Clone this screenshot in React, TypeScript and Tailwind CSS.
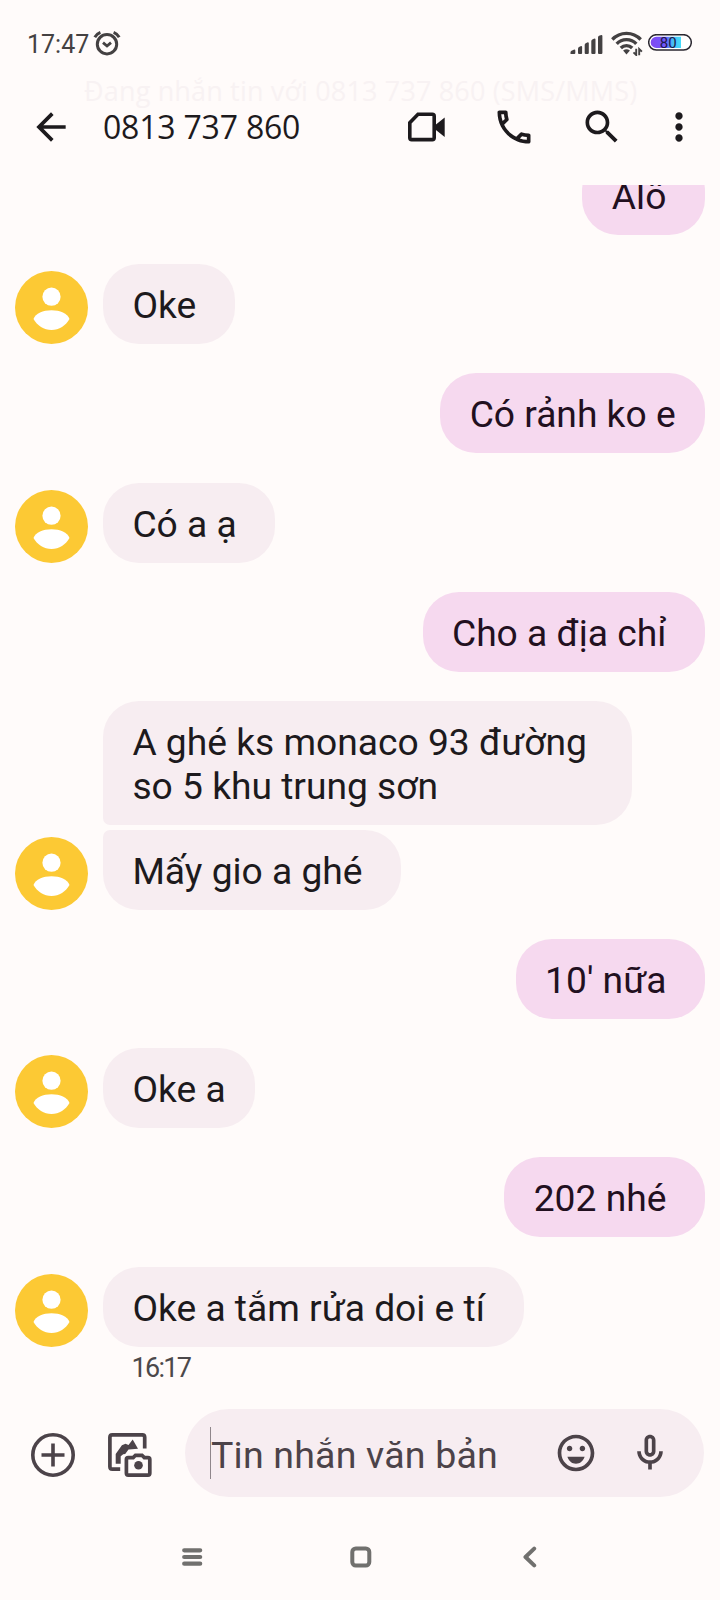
import React from "react";

interface Message {
  text: string;
  mine?: boolean;
  avatar?: boolean;
  // corner overrides for grouped bubbles
  shape?: string;
  gap?: string;
}

const MESSAGES: Message[] = [
  { text: "Alô ", mine: true },
  { text: "Oke ", avatar: true },
  { text: "Có rảnh ko e", mine: true },
  { text: "Có a ạ ", avatar: true },
  { text: "Cho a địa chỉ ", mine: true },
  { text: "A ghé ks monaco 93 đường \nso 5 khu trung sơn", shape: "w-[529px] rounded-bl-[7px]" },
  { text: "Mấy gio a ghé ", avatar: true, shape: "rounded-tl-[7px]", gap: "mt-[4.5px]" },
  { text: "10' nữa ", mine: true },
  { text: "Oke a", avatar: true },
  { text: "202 nhé ", mine: true },
  { text: "Oke a tắm rửa doi e tí ", avatar: true },
];

const Icon: React.FC<{ d: string; className?: string }> = ({ d, className = "" }) => (
  <svg viewBox="0 0 24 24" fill="currentColor" className={`size-11 shrink-0 ${className}`}>
    <path d={d} />
  </svg>
);

const Avatar = () => (
  <svg viewBox="0 0 73 73" className="size-[73px] shrink-0">
    <circle cx="36.5" cy="36.5" r="36.5" fill="#fcc934" />
    <circle cx="36.5" cy="25.7" r="9.1" fill="#fff" />
    <path
      d="M18.5 48C20.5 42.5 28 39.3 36.5 39.3S52.5 42.5 54.5 48C51 54.5 44 59 36.5 59S22 54.5 18.5 48Z"
      fill="#fff"
    />
  </svg>
);

const StatusBar = () => (
  <div className="flex h-[72px] items-start px-7 pt-7 text-[#444142]">
    <span className="-ml-px mt-[1px] w-[66px] text-[25px] leading-[31px]">17:47</span>
    <svg viewBox="0 0 28 28" className="mt-px size-7" fill="none" stroke="currentColor">
      <circle cx="14" cy="15.2" r="9.7" strokeWidth="3" />
      <path d="M10 13.6l4 3.4 4-3.4" strokeWidth="2.8" />
      <path d="M1.8 8.2C3 6 5 4.3 7.4 3.4M26.2 8.2C25 6 23 4.3 20.6 3.4" strokeWidth="3" />
    </svg>
    <div className="ml-auto flex items-center">
      <svg viewBox="0 0 34 24" className="mr-[2px] mt-px h-6 w-[34px]" fill="currentColor">
        <path d="M.5 23v-1.700q0-1 1-1.500l2.800-1.300q1 0 1 1v2.500q0 1-1 1H1.500z" />
        <path d="M8 17.500q0-1 1-1.500l2.100-.9q1 0 1 1v5.900q0 1-1 1H9q-1 0-1-1z" />
        <path d="M14.700 13.700q0-1 1-1.500l2.100-.9q1 0 1 1v9.700q0 1-1 1h-2.100q-1 0-1-1z" />
        <path d="M21.300 10q0-1 1-1.500l2.200-.9q1 0 1 1v13.400q0 1-1 1h-2.200q-1 0-1-1z" />
        <path d="M28 6.300q0-1 1-1.500l2.400-.9q1 0 1 1v17.100q0 1-1 1H29q-1 0-1-1z" />
      </svg>
      <svg viewBox="0 0 32 26" className="ml-[5px] mt-[2px] h-[26px] w-8" fill="none" stroke="currentColor" strokeWidth="3.3">
        <path d="M1.300 9.500C9 1.300 22 1.300 29.700 9.500" />
        <path d="M5.700 13.800C10.800 8.100 20.200 8.100 25.300 13.800" />
        <path d="M9.800 18C13 14.700 18 14.700 21.200 18" />
        <path d="M12.100 20.500Q15.500 18 18.900 20.500L15.500 24.500Z" fill="currentColor" stroke="none" />
        <path d="M25.200 18.800v6.200l-2.700-2.700M28.200 25.200v-6.200l2.700 2.700" strokeWidth="1.900" />
      </svg>
      <svg viewBox="0 0 44 17" className="ml-[5px] h-[17px] w-11">
        <defs>
          <linearGradient id="charge">
            <stop offset="0" stopColor="#8048f0" />
            <stop offset="0.5" stopColor="#7058ff" />
            <stop offset="0.72" stopColor="#45bdf5" />
            <stop offset="1" stopColor="#45dcfb" />
          </linearGradient>
        </defs>
        <rect x="0.7" y="0.7" width="42.6" height="15.4" rx="7.7" fill="#fff" stroke="#2b2730" strokeWidth="1.5" />
        <path d="M8.3 2.8H33v11.2H8.300a5.600 5.600 0 0 1 0-11.200z" fill="url(#charge)" />
        <text x="20.2" y="13.7" textAnchor="middle" fontSize="15" fill="#1c1a4c" className="font-['Roboto',sans-serif]">
          80
        </text>
      </svg>
    </div>
  </div>
);

const Header = () => (
  <header className="relative flex h-[113px] items-start pt-[33px] text-[#1d1a1d]">
    <p className="absolute left-[84px] top-0 whitespace-nowrap font-['Open_Sans',sans-serif] text-[27px] leading-[38px] tracking-[0.16px] text-[#f8f2f3]">
      Đang nhắn tin với 0813 737 860 (SMS/MMS)
    </p>
    <Icon className="ml-[29px]" d="M20 11H7.830l5.590-5.590L12 4l-8 8 8 8 1.410-1.410L7.830 13H20v-2z" />
    <h1 className="ml-[30px] w-[300px] font-['Open_Sans',sans-serif] text-[32px] leading-[44px] tracking-[-0.2px]">0813 737 860</h1>
    <svg viewBox="0 0 44 44" className="ml-[1px] size-11 shrink-0">
      <path d="M14 9.300h14.300q1.900 0 1.900 1.900v21.500q0 1.900-1.900 1.900H7.700q-1.900 0-1.900-1.900V17.700z" fill="none" stroke="currentColor" strokeWidth="3.600" />
      <path d="M31 20.200l9.700-7.800v19.500L31 24.200z" fill="currentColor" />
    </svg>
    <Icon
      className="ml-[44px]"
      d="M6.540 5c.06.890.210 1.760.450 2.590l-1.200 1.200c-.410-1.200-.670-2.470-.760-3.790h1.510m9.860 12.020c.850.240 1.720.390 2.600.450v1.490c-1.320-.09-2.590-.350-3.800-.750l1.200-1.190M7.500 3H4c-.550 0-1 .450-1 1 0 9.390 7.610 17 17 17 .550 0 1-.450 1-1v-3.490c0-.550-.450-1-1-1-1.240 0-2.450-.200-3.570-.570-.100-.040-.210-.050-.310-.050-.260 0-.510.100-.710.290l-2.200 2.200c-2.830-1.450-5.150-3.760-6.590-6.590l2.200-2.200c.280-.280.360-.670.250-1.020C8.700 6.450 8.500 5.250 8.500 4c0-.550-.450-1-1-1z"
    />
    <Icon
      className="ml-[44px]"
      d="M15.500 14h-.790l-.280-.270C15.410 12.590 16 11.110 16 9.500 16 5.910 13.090 3 9.500 3S3 5.910 3 9.500 5.910 16 9.500 16c1.610 0 3.090-.590 4.230-1.570l.270.280v.790l5 4.990L20.490 19l-4.990-5zm-6 0C7.010 14 5 11.990 5 9.500S7.010 5 9.500 5 14 7.010 14 9.500 11.990 14 9.500 14z"
    />
    <Icon
      className="ml-[33px]"
      d="M12 8c1.100 0 2-.900 2-2s-.900-2-2-2-2 .900-2 2 .900 2 2 2zm0 2c-1.100 0-2 .900-2 2s.900 2 2 2 2-.900 2-2-.900-2-2-2zm0 6c-1.100 0-2 .900-2 2s.900 2 2 2 2-.900 2-2-.900-2-2-2z"
    />
  </header>
);

const Bubble: React.FC<{ message: Message }> = ({ message }) => {
  const { text, mine, avatar, shape = "", gap = "mt-[29.25px]" } = message;
  return (
    <div className={`flex shrink-0 items-end ${gap} ${mine ? "justify-end" : ""}`}>
      {!mine && <div className="mr-[15.5px] w-[73px] shrink-0">{avatar && <Avatar />}</div>}
      <div
        className={`whitespace-pre rounded-[36px] px-[29.4px] pb-[17px] pt-[19px] text-[37.2px] leading-[44px] ${
          mine ? "bg-[#f6d9ef] text-[#22101f]" : "bg-[#f7edf1] text-[#1d1a1d]"
        } ${shape}`}
      >
        {text}
      </div>
    </div>
  );
};

const Composer = () => (
  <div className="flex h-[88px] items-center pl-[31px] pr-4 text-[#4c4349]">
    <svg viewBox="0 0 44 44" className="mt-[3px] size-11" fill="none" stroke="currentColor" strokeWidth="3.6">
      <circle cx="22" cy="22" r="20.2" />
      <path d="M22 10.5v23M10.5 22h23" />
    </svg>
    <svg viewBox="0 0 44 44" className="ml-[33px] mt-[3px] size-11" fill="none" stroke="currentColor" strokeWidth="3.7">
      <path d="M12.2 36.2H4.300q-2.400 0-2.400-2.400V4.300q0-2.400 2.400-2.400h30q2.400 0 2.400 2.400v11.300" />
      <path d="M7.700 30.800V21l6.200-8.700 3.600-1.600 3 1.300L24.700 6.500l5.300 9.300-9.500.7-3.300 4.500-2 .3-2.500 2v7.500z" fill="currentColor" stroke="none" />
      <path d="M20.200 24.600h5l2.300-2.300h6.500l2.300 2.300h3.700q1.800 0 1.800 1.800v13.900q0 1.800-1.800 1.800H20.200q-1.800 0-1.800-1.800V26.400q0-1.800 1.800-1.800z" />
      <circle cx="30.500" cy="32.200" r="4.300" fill="currentColor" stroke="none" />
    </svg>
    <div className="ml-[33px] flex h-full flex-1 items-center rounded-full bg-[#f7edf1] pl-[25px] pr-[32px]">
      <span className="h-[52px] w-px bg-[#8f868b]" />
      <span className="whitespace-nowrap pt-[3px] text-[37.5px] leading-[44px] tracking-[0.2px]">Tin nhắn văn bản</span>
      <Icon
        className="ml-auto"
        d="M11.990 2C6.470 2 2 6.480 2 12s4.470 10 9.990 10C17.520 22 22 17.520 22 12S17.520 2 11.990 2zM12 20c-4.420 0-8-3.580-8-8s3.580-8 8-8 8 3.580 8 8-3.580 8-8 8zm3.500-9c.830 0 1.500-.670 1.500-1.500S16.330 8 15.500 8 14 8.670 14 9.500s.670 1.500 1.500 1.500zm-7 0c.830 0 1.500-.670 1.500-1.500S9.330 8 8.500 8 7 8.670 7 9.500 7.670 11 8.500 11zm3.500 6.900c2.200 0 4-1.500 4.700-3.800H7.300c.700 2.300 2.500 3.800 4.700 3.800z"
      />
      <Icon
        className="ml-[30px]"
        d="M12 14c1.660 0 3-1.340 3-3V5c0-1.660-1.340-3-3-3S9 3.340 9 5v6c0 1.660 1.340 3 3 3zm-1-9c0-.550.450-1 1-1s1 .450 1 1v6c0 .550-.450 1-1 1s-1-.450-1-1V5zm6 6c0 2.760-2.240 5-5 5s-5-2.240-5-5H5c0 3.530 2.610 6.430 6 6.920V21h2v-3.080c3.390-.490 6-3.390 6-6.920h-2z"
      />
    </div>
  </div>
);

const NavBar = () => (
  <nav className="flex h-[22px] items-center pl-[181px] text-[#71706e]">
    <svg viewBox="0 0 22 22" className="size-[22px]" stroke="currentColor" strokeWidth="4.2" strokeLinecap="round">
      <path d="M3.2 4.3h16M3.2 11h16M3.2 17.7h16" />
    </svg>
    <svg viewBox="0 0 22 22" className="ml-[147px] size-[22px]" fill="none" stroke="currentColor" strokeWidth="4">
      <rect x="2.3" y="2.5" width="17" height="17" rx="3.5" />
    </svg>
    <svg viewBox="0 0 16 22" className="ml-[150px] h-[22px] w-4" fill="none" stroke="currentColor" strokeWidth="4" strokeLinecap="round" strokeLinejoin="round">
      <path d="M12.200 2.600L3.500 11l8.700 8.400" />
    </svg>
  </nav>
);

const App = () => {
  return (
    <div className="flex h-[1600px] w-[720px] flex-col overflow-hidden bg-[#fffbfa] font-['Roboto',sans-serif]">
      <StatusBar />
      <Header />
      <main className="flex h-[1224px] shrink-0 flex-col justify-end overflow-hidden pb-[26.4px] pl-[14.5px] pr-[15px]">
        {MESSAGES.map((message) => (
          <Bubble key={message.text} message={message} />
        ))}
        <time className="ml-[117px] mt-[6px] text-[27px] leading-[30px] tracking-[-1.7px] text-[#4c484a]">16:17</time>
      </main>
      <Composer />
      <div className="h-[49px]" />
      <NavBar />
    </div>
  );
};

export default App;
